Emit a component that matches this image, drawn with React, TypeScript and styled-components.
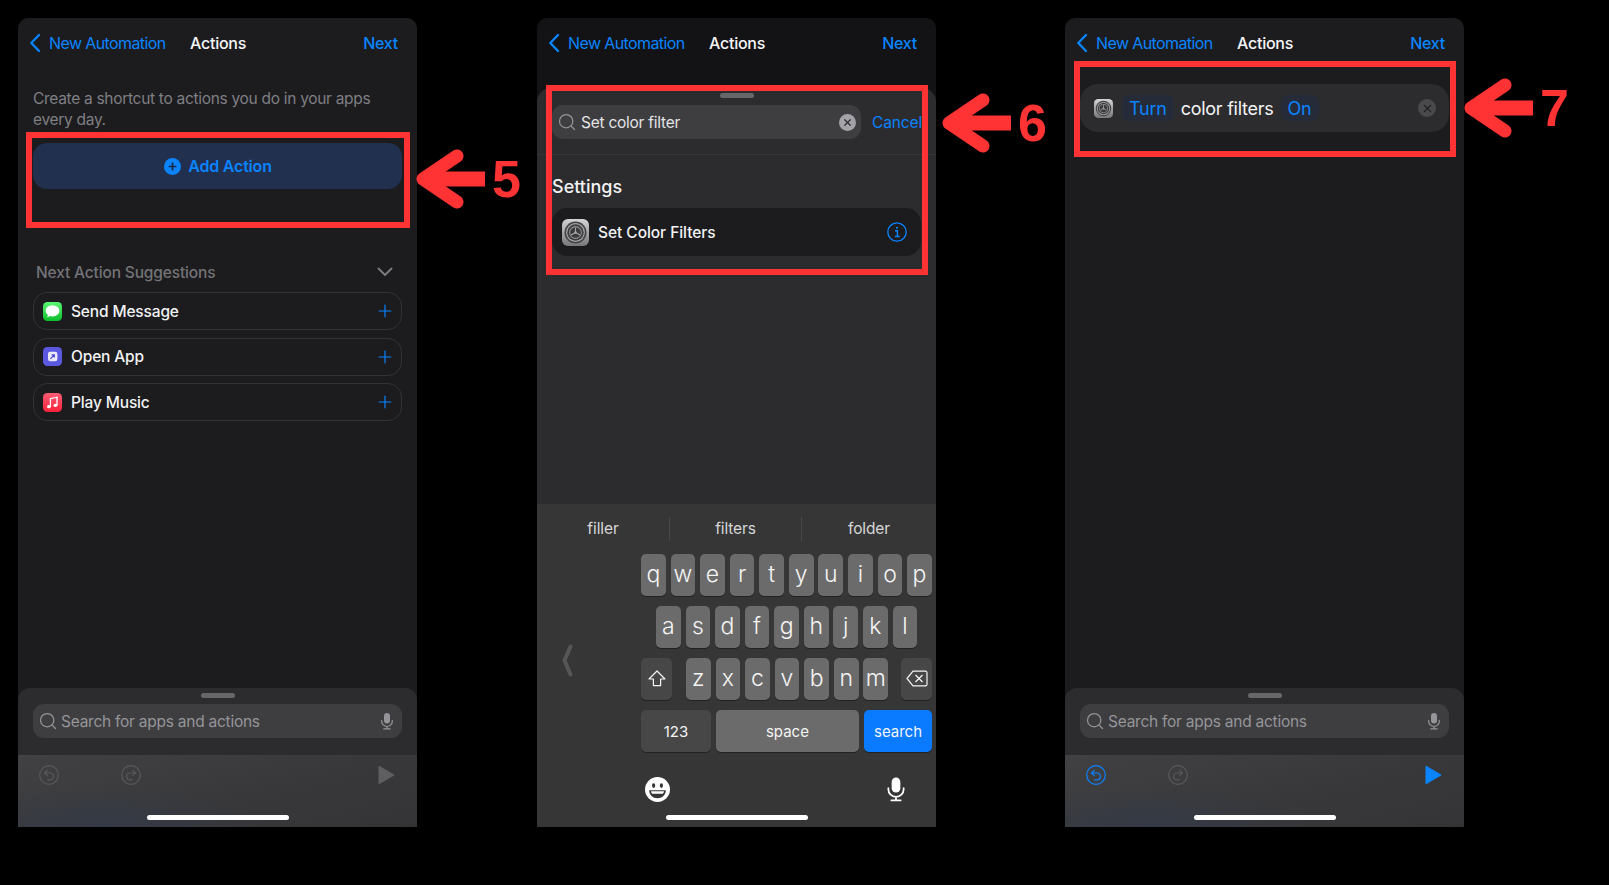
import React from "react";
import styled, { createGlobalStyle } from "styled-components";
import { Plus, Search, X } from "lucide-react";

const Global = createGlobalStyle`
  html, body { margin: 0; padding: 0; background: #000; }
  body { width: 1609px; height: 885px; overflow: hidden; font-family: Inter, "Liberation Sans", sans-serif; -webkit-font-smoothing: antialiased; }
`;

const Page = styled.div`
  display: flex;
  align-items: flex-start;
  padding: 18px 0 0 18px;
  background: #000;
  height: 867px;
  box-sizing: border-box;
`;

const Phone = styled.section<{ $gap?: number; $dim?: boolean }>`
  position: relative;
  display: flex;
  flex-direction: column;
  width: 399px;
  height: 809px;
  flex: none;
  margin-right: ${(p) => p.$gap ?? 0}px;
  border-radius: 10px 10px 0 0;
  background: ${(p) => (p.$dim ? "#131315" : "#1c1c1e")};
`;

const Nav = styled.header<{ $extra?: number }>`
  display: flex;
  align-items: center;
  height: ${(p) => 50 + (p.$extra ?? 0)}px;
  flex: none;
  padding: 0 19px ${(p) => p.$extra ?? 0}px 11px;
  box-sizing: border-box;
  font-size: 16px;
  letter-spacing: -0.25px;
`;

const NavBack = styled.span`
  display: flex;
  align-items: center;
  color: #0a84ff;
  width: 161px;
  white-space: nowrap;
  letter-spacing: -0.6px;
  svg { margin-right: 8px; flex: none; }
`;

const NavTitle = styled.span`
  color: #f5f5f7;
  font-weight: 500;
`;

const NavNext = styled.span`
  margin-left: auto;
  color: #0a84ff;
  font-weight: 500;
`;

const Body = styled.div`
  flex: 1;
  display: flex;
  flex-direction: column;
  padding: 21px 15px 0;
  min-height: 0;
`;

const Description = styled.p`
  margin: 0 0 13px;
  font-size: 15.5px;
  line-height: 20.5px;
  letter-spacing: -0.3px;
  color: #7f7f84;
`;

const AddButton = styled.div`
  display: flex;
  align-items: center;
  justify-content: center;
  gap: 7px;
  height: 46px;
  padding-left: 1px;
  border-radius: 14px;
  background: #22304f;
  color: #0a84ff;
  font-size: 16px;
  font-weight: 600;
  letter-spacing: -0.2px;
`;

const SectionHeader = styled.div`
  display: flex;
  align-items: center;
  justify-content: space-between;
  margin: 71px 0 8px;
  height: 24px;
  padding: 0 9px 0 3px;
  font-size: 15.5px;
  font-weight: 500;
  letter-spacing: -0.15px;
  color: #737378;
`;

const SuggestionList = styled.div`
  display: flex;
  flex-direction: column;
  gap: 7.7px;
`;

const Suggestion = styled.div`
  display: flex;
  align-items: center;
  height: 38px;
  box-sizing: border-box;
  padding: 0 6px 0 9px;
  border: 1px solid #333336;
  border-radius: 14px;
  color: #f2f2f4;
  font-size: 15.5px;
  font-weight: 500;
  letter-spacing: -0.15px;
  > svg:first-child { margin-right: 9px; flex: none; }
  > svg:last-child { margin-left: auto; color: #0a84ff; flex: none; }
`;

const SearchSheet = styled.div`
  flex: none;
  height: 67px;
  box-sizing: border-box;
  padding: 5px 15px 0;
  background: #2c2c2e;
  border-radius: 12px 12px 0 0;
`;

const Grabber = styled.div`
  width: 34px;
  height: 5px;
  margin: 0 auto 6px;
  border-radius: 3px;
  background: #67676b;
`;

const SearchField = styled.div`
  display: flex;
  align-items: center;
  height: 34px;
  padding: 0 5px;
  box-sizing: border-box;
  border-radius: 11px;
  background: #3e3e41;
  color: #959599;
  font-size: 15.5px;
  letter-spacing: -0.25px;
  > svg:first-child { margin-right: 3px; flex: none; }
  > svg:last-child { margin-left: auto; margin-right: 1px; flex: none; }
`;

const Toolbar = styled.footer`
  position: relative;
  flex: none;
  height: 72px;
  box-sizing: border-box;
  padding: 10px 22px 0 21px;
  display: flex;
  align-items: flex-start;
  background:
    radial-gradient(ellipse 160px 40px at 85px 100%, #343a46 0%, rgba(52, 58, 70, 0) 100%),
    linear-gradient(165deg, #414143 0%, #38383a 60%, #343436 100%);
`;

const ToolGap = styled.span`
  width: 62px;
  flex: none;
`;

const PlayWrap = styled.span`
  margin-left: auto;
  display: flex;
`;

const HomeBar = styled.div`
  position: absolute;
  left: 50%;
  bottom: 7px;
  width: 142px;
  height: 5px;
  margin-left: -71px;
  border-radius: 3px;
  background: #fff;
`;

/* second phone */
const Sheet = styled.div`
  flex: 1;
  display: flex;
  flex-direction: column;
  padding: 5px 15px 0;
  background: #2c2c2e;
  border-radius: 14px 14px 0 0;
  min-height: 0;
`;

const SearchLine = styled.div`
  position: relative;
  display: flex;
  align-items: center;
  justify-content: space-between;
  margin-top: 1px;
  padding-bottom: 16px;
  &::after {
    content: "";
    position: absolute;
    left: -15px;
    right: -15px;
    bottom: 0;
    height: 1px;
    background: #353537;
  }
`;

const ActiveSearch = styled.div`
  display: flex;
  align-items: center;
  width: 309px;
  height: 34px;
  padding: 0 5px;
  box-sizing: border-box;
  border-radius: 11px;
  background: #3e3e41;
  color: #e4e4e6;
  font-size: 15.5px;
  letter-spacing: -0.25px;
  > svg:first-child { margin-right: 4px; flex: none; }
`;

const ClearDot = styled.span`
  display: flex;
  align-items: center;
  justify-content: center;
  margin-left: auto;
  margin-right: 0;
  width: 17px;
  height: 17px;
  border-radius: 50%;
  background: #a3a3a8;
  color: #2f2f32;
`;

const Cancel = styled.span`
  color: #0a84ff;
  font-size: 15.5px;
  letter-spacing: -0.15px;
  margin-right: -1px;
`;

const GroupTitle = styled.h2`
  margin: 20px 0 9px;
  font-size: 18px;
  line-height: 24px;
  font-weight: 500;
  color: #f2f2f4;
`;

const ResultRow = styled.div`
  display: flex;
  align-items: center;
  height: 48px;
  padding: 0 14px 0 10px;
  border-radius: 15px;
  background: #1c1c1e;
  color: #f2f2f4;
  font-size: 15.5px;
  font-weight: 500;
  letter-spacing: -0.05px;
  > svg:first-child { margin-right: 9px; flex: none; }
  > svg:last-child { margin-left: auto; flex: none; }
`;

const Keyboard = styled.div`
  position: relative;
  flex: none;
  height: 323px;
  background: #363636;
`;

const Predictions = styled.div`
  display: grid;
  grid-template-columns: 133px 132px 134px;
  height: 50px;
  align-items: center;
  text-align: center;
  color: #d6d6d8;
  font-size: 15.5px;
  letter-spacing: -0.1px;
`;

const Prediction = styled.span<{ $line?: boolean }>`
  line-height: 24px;
  border-right: ${(p) => (p.$line ? "1px solid #48484a" : "none")};
`;

const KeyArea = styled.div`
  display: flex;
`;

const SideRail = styled.div`
  width: 104px;
  flex: none;
  display: flex;
  align-items: center;
  padding: 15px 0 0 25px;
  box-sizing: border-box;
  color: #565656;
`;

const KeyRows = styled.div`
  width: 291px;
  display: flex;
  flex-direction: column;
  gap: 10px;
`;

const KeyRow = styled.div<{ $inset?: number; $between?: boolean }>`
  display: flex;
  gap: 4.9px;
  padding-left: ${(p) => p.$inset ?? 0}px;
  justify-content: ${(p) => (p.$between ? "space-between" : "flex-start")};
`;

const KeyGroup = styled.div`
  display: flex;
  gap: 4.9px;
  margin-left: 1px;
`;

const Key = styled.span<{ $w?: number; $tone?: "letter" | "dark" | "blue"; $small?: boolean }>`
  display: flex;
  align-items: center;
  justify-content: center;
  flex: none;
  width: ${(p) => p.$w ?? 24.7}px;
  height: 42px;
  border-radius: 5px;
  box-shadow: 0 1px 0 #222;
  color: #f4f4f4;
  font-size: ${(p) => (p.$small ? 15 : 23)}px;
  font-weight: ${(p) => (p.$small ? 400 : 300)};
  padding-bottom: ${(p) => (p.$small ? 0 : 2)}px;
  box-sizing: border-box;
  background: ${(p) =>
    p.$tone === "dark" ? "#474747" : p.$tone === "blue" ? "#0a7aff" : "#6b6b6b"};
`;

const KeyboardExtras = styled.div`
  display: flex;
  align-items: center;
  justify-content: space-between;
  padding: 24px 27px 0 108px;
`;

/* third phone */
const ActionCard = styled.div`
  display: flex;
  align-items: center;
  height: 48px;
  margin: 16px 15px 0;
  padding: 0 13px 0 14px;
  border-radius: 18px;
  background: #2c2c2e;
  color: #f4f4f6;
  font-size: 18px;
  letter-spacing: -0.25px;
  > svg:first-child { margin-right: 9px; flex: none; }
`;

const Token = styled.span<{ $after?: number }>`
  display: flex;
  align-items: center;
  height: 26px;
  padding: 0 7px;
  margin: 0 7px 0 ${(p) => p.$after ?? 0}px;
  border-radius: 7px;
  background: #252b38;
  color: #0a84ff;
`;

const Remove = styled.span`
  display: flex;
  align-items: center;
  justify-content: center;
  margin-left: auto;
  width: 18px;
  height: 18px;
  border-radius: 50%;
  background: #4a4a4c;
  color: #1f1f21;
`;

const PhoneSpacer = styled.div`
  flex: 1;
`;

/* annotations over the picture */
const Highlight = styled.div<{ $l: number; $t: number; $w: number; $h: number }>`
  position: absolute;
  left: ${(p) => p.$l}px;
  top: ${(p) => p.$t}px;
  width: ${(p) => p.$w}px;
  height: ${(p) => p.$h}px;
  box-sizing: border-box;
  border: 6px solid #ff3333;
  pointer-events: none;
`;

const Callout = styled.div<{ $l: number; $t: number }>`
  position: absolute;
  left: ${(p) => p.$l}px;
  top: ${(p) => p.$t}px;
  display: flex;
  align-items: center;
  gap: 7px;
  height: 60px;
`;

const CalloutNumber = styled.span`
  font-family: "Liberation Sans", Arial, sans-serif;
  font-size: 52px;
  font-weight: 700;
  line-height: 60px;
  color: #ff3333;
`;

const RedArrow = () => (
  <svg width="69" height="60" viewBox="0 0 69 60" fill="none">
    <path d="M41 7 L7 30 L41 53" stroke="#ff3333" strokeWidth="13" strokeLinecap="round" strokeLinejoin="round" />
    <path d="M14 30 H69" stroke="#ff3333" strokeWidth="15" />
  </svg>
);

const BackChevron = () => (
  <svg width="12" height="20" viewBox="0 0 12 20" fill="none">
    <path d="M10 2 2.300 10 10 18" stroke="#0a84ff" strokeWidth="2.400" strokeLinecap="round" strokeLinejoin="round" />
  </svg>
);

const DownChevron = () => (
  <svg width="16" height="10" viewBox="0 0 16 10" fill="none">
    <path d="M1.500 1.500 8 8l6.500-6.500" stroke="#7b7b80" strokeWidth="1.900" strokeLinecap="round" strokeLinejoin="round" />
  </svg>
);

const Mic = ({ size = 18, color = "#959599" }: { size?: number; color?: string }) => (
  <svg width={size} height={size} viewBox="0 0 18 18" fill="none">
    <rect x="6" y="1" width="6" height="10.500" rx="3" fill={color} />
    <path d="M3.700 8.400v.8a5.300 5.300 0 0 0 10.600 0v-.8M9 14.600v2M5.800 16.900h6.400" stroke={color} strokeWidth="1.200" strokeLinecap="round" />
  </svg>
);

const CircleArrow = ({ flip, color }: { flip?: boolean; color: string }) => (
  <svg width="20" height="20" viewBox="0 0 20 20" fill="none" style={flip ? { transform: "scaleX(-1)" } : undefined}>
    <circle cx="10" cy="10" r="9.300" stroke={color} strokeWidth="1.200" />
    <path d="M8.300 5.400 5.600 8l2.700 2.600M5.800 8h5.200a3.400 3.400 0 0 1 0 6.800H8.600" stroke={color} strokeWidth="1.200" strokeLinecap="round" strokeLinejoin="round" />
  </svg>
);

const Play = ({ color }: { color: string }) => (
  <svg width="17" height="20" viewBox="0 0 17 20">
    <path d="M1 1.200 16 10 1 18.800Z" fill={color} stroke={color} strokeWidth="1" strokeLinejoin="round" />
  </svg>
);

const MessagesIcon = () => (
  <svg width="19" height="19" viewBox="0 0 19 19">
    <defs>
      <linearGradient id="msgBg" x1="0" y1="0" x2="0" y2="1">
        <stop offset="0" stopColor="#5bf675" />
        <stop offset="1" stopColor="#0cbd2a" />
      </linearGradient>
    </defs>
    <rect width="19" height="19" rx="4.400" fill="url(#msgBg)" />
    <ellipse cx="9.500" cy="8.800" rx="6.900" ry="5.600" fill="#fff" />
    <path d="M5 12.500c0 1.200-.6 2-1.400 2.700 1.600 0 3-.6 3.900-1.600Z" fill="#fff" />
  </svg>
);

const OpenAppIcon = () => (
  <svg width="19" height="19" viewBox="0 0 19 19">
    <rect width="19" height="19" rx="4.400" fill="#5b58e0" />
    <rect x="5" y="4.700" width="9.400" height="9.600" rx="2.200" fill="#e9e9fb" />
    <path d="M7.400 11.800 11 8.200M8.600 7.900h2.700v2.700" stroke="#4844d4" strokeWidth="1.200" fill="none" />
  </svg>
);

const MusicIcon = () => (
  <svg width="19" height="19" viewBox="0 0 19 19">
    <defs>
      <linearGradient id="musBg" x1="0" y1="0" x2="0" y2="1">
        <stop offset="0" stopColor="#fb5c74" />
        <stop offset="1" stopColor="#fa233b" />
      </linearGradient>
    </defs>
    <rect width="19" height="19" rx="4.400" fill="url(#musBg)" />
    <path d="M7.400 13.600V5.700l6.600-1.500v8" stroke="#fff" strokeWidth="1.300" fill="none" />
    <ellipse cx="5.900" cy="13.700" rx="1.900" ry="1.600" fill="#fff" />
    <ellipse cx="12.400" cy="12.300" rx="1.900" ry="1.600" fill="#fff" />
  </svg>
);

const SettingsIcon = ({ size, id }: { size: number; id: string }) => (
  <svg width={size} height={size} viewBox="0 0 27 27">
    <defs>
      <linearGradient id={id} x1="0" y1="0" x2="0" y2="1">
        <stop offset="0" stopColor="#d4d4d6" />
        <stop offset="1" stopColor="#77777b" />
      </linearGradient>
    </defs>
    <rect width="27" height="27" rx="6" fill={`url(#${id})`} />
    <circle cx="13.500" cy="13.500" r="11" fill="#444446" />
    <circle cx="13.500" cy="13.500" r="9.400" fill="#a4a4a6" />
    <circle cx="13.500" cy="13.500" r="8.200" fill="#3e3e40" />
    <circle cx="13.500" cy="13.500" r="6.400" fill="#8f8f91" />
    <circle cx="13.500" cy="13.500" r="5.300" fill="#3a3a3c" />
    <path d="M13.500 13.500V8.600M13.500 13.500l4.400 2.400M13.500 13.500l-4.400 2.400" stroke="#a4a4a6" strokeWidth="1.100" />
    <circle cx="13.500" cy="13.500" r="1.300" fill="#a4a4a6" />
  </svg>
);

const InfoIcon = () => (
  <svg width="20" height="20" viewBox="0 0 20 20" fill="none">
    <circle cx="10" cy="10" r="9.200" stroke="#0a84ff" strokeWidth="1.300" />
    <circle cx="10" cy="5.800" r="1.100" fill="#0a84ff" />
    <path d="M8 8.700h2.400v5.600M7.800 14.500h5" stroke="#0a84ff" strokeWidth="1.400" />
  </svg>
);

const AddGlyph = () => (
  <svg width="17" height="17" viewBox="0 0 17 17">
    <circle cx="8.500" cy="8.500" r="8.500" fill="#0a84ff" />
    <path d="M8.500 4.600v7.800M4.600 8.500h7.800" stroke="#1c2a45" strokeWidth="1.700" />
  </svg>
);

const ShiftIcon = () => (
  <svg width="20" height="19" viewBox="0 0 20 19" fill="none">
    <path d="M10 2 2 10h4.400v6.600h7.200V10H18Z" stroke="#f4f4f4" strokeWidth="1.200" strokeLinejoin="round" />
  </svg>
);

const BackspaceIcon = () => (
  <svg width="22" height="17" viewBox="0 0 22 17" fill="none">
    <path d="M7 1.200h12.400a1.600 1.600 0 0 1 1.600 1.600v11.400a1.600 1.600 0 0 1-1.600 1.600H7L1 8.500Z" stroke="#f4f4f4" strokeWidth="1.200" strokeLinejoin="round" />
    <path d="m9.500 5 7 7M16.500 5l-7 7" stroke="#f4f4f4" strokeWidth="1.300" />
  </svg>
);

const EmojiIcon = () => (
  <svg width="25" height="25" viewBox="0 0 25 25">
    <circle cx="12.500" cy="12.500" r="12.500" fill="#fff" />
    <ellipse cx="8.600" cy="8.600" rx="1.600" ry="2.300" fill="#363636" />
    <ellipse cx="16.400" cy="8.600" rx="1.600" ry="2.300" fill="#363636" />
    <path d="M4.200 13.200h16.600c0 4.600-3.600 8-8.300 8s-8.300-3.400-8.300-8Z" fill="#363636" />
    <path d="M6 14.200h13c-.2 1.100-.6 1.900-1.200 2.600H7.200C6.600 16.100 6.200 15.300 6 14.200Z" fill="#fff" />
  </svg>
);

const SideChevron = () => (
  <svg width="11" height="33" viewBox="0 0 11 33" fill="none">
    <path d="M8.500 2.500 2.500 16.500 8.500 30.500" stroke="currentColor" strokeWidth="4" strokeLinecap="round" strokeLinejoin="round" />
  </svg>
);

const NavBar = ({ extra }: { extra?: number }) => (
  <Nav $extra={extra}>
    <NavBack>
      <BackChevron />
      New Automation
    </NavBack>
    <NavTitle>Actions</NavTitle>
    <NavNext>Next</NavNext>
  </Nav>
);

const BottomPanel = ({ active }: { active?: boolean }) => (
  <>
    <SearchSheet>
      <Grabber />
      <SearchField>
        <Search size={20} strokeWidth={1.500} />
        Search for apps and actions
        <Mic />
      </SearchField>
    </SearchSheet>
    <Toolbar>
      <CircleArrow color={active ? "#0a84ff" : "#59595b"} />
      <ToolGap />
      <CircleArrow flip color="#59595b" />
      <PlayWrap>
        <Play color={active ? "#0a84ff" : "#5f5f61"} />
      </PlayWrap>
      <HomeBar />
    </Toolbar>
  </>
);

const row1 = "qwertyuiop".split("");
const row2 = "asdfghjkl".split("");
const row3 = "zxcvbnm".split("");

export default function App() {
  return (
    <Page>
      <Global />
      <Phone $gap={120}>
        <NavBar />
        <Body>
          <Description>Create a shortcut to actions you do in your apps every day.</Description>
          <AddButton>
            <AddGlyph />
            Add Action
          </AddButton>
          <SectionHeader>
            Next Action Suggestions
            <DownChevron />
          </SectionHeader>
          <SuggestionList>
            <Suggestion>
              <MessagesIcon />
              Send Message
              <Plus size={20} strokeWidth={1.400} />
            </Suggestion>
            <Suggestion>
              <OpenAppIcon />
              Open App
              <Plus size={20} strokeWidth={1.400} />
            </Suggestion>
            <Suggestion>
              <MusicIcon />
              Play Music
              <Plus size={20} strokeWidth={1.400} />
            </Suggestion>
          </SuggestionList>
        </Body>
        <BottomPanel />
        <Highlight $l={8} $t={114} $w={384} $h={96} />
        <Callout $l={398} $t={131}>
          <RedArrow />
          <CalloutNumber>5</CalloutNumber>
        </Callout>
      </Phone>

      <Phone $gap={129} $dim>
        <NavBar extra={20} />
        <Sheet>
          <Grabber />
          <SearchLine>
            <ActiveSearch>
              <Search size={20} strokeWidth={1.500} color="#959599" />
              Set color filter
              <ClearDot>
                <X size={11} strokeWidth={2.600} />
              </ClearDot>
            </ActiveSearch>
            <Cancel>Cancel</Cancel>
          </SearchLine>
          <GroupTitle>Settings</GroupTitle>
          <ResultRow>
            <SettingsIcon size={27} id="setA" />
            Set Color Filters
            <InfoIcon />
          </ResultRow>
        </Sheet>
        <Keyboard>
          <Predictions>
            <Prediction $line>filler</Prediction>
            <Prediction $line>filters</Prediction>
            <Prediction>folder</Prediction>
          </Predictions>
          <KeyArea>
            <SideRail>
              <SideChevron />
            </SideRail>
            <KeyRows>
              <KeyRow>
                {row1.map((k) => (
                  <Key key={k}>{k}</Key>
                ))}
              </KeyRow>
              <KeyRow $inset={15}>
                {row2.map((k) => (
                  <Key key={k}>{k}</Key>
                ))}
              </KeyRow>
              <KeyRow $between>
                <Key $w={31} $tone="dark">
                  <ShiftIcon />
                </Key>
                <KeyGroup>
                  {row3.map((k) => (
                    <Key key={k}>{k}</Key>
                  ))}
                </KeyGroup>
                <Key $w={31} $tone="dark">
                  <BackspaceIcon />
                </Key>
              </KeyRow>
              <KeyRow>
                <Key $w={70} $tone="dark" $small>
                  123
                </Key>
                <Key $w={143} $small>
                  space
                </Key>
                <Key $w={68.500} $tone="blue" $small>
                  search
                </Key>
              </KeyRow>
            </KeyRows>
          </KeyArea>
          <KeyboardExtras>
            <EmojiIcon />
            <Mic size={26} color="#ffffff" />
          </KeyboardExtras>
          <HomeBar />
        </Keyboard>
        <Highlight $l={9} $t={67} $w={382} $h={190} />
        <Callout $l={405} $t={75}>
          <RedArrow />
          <CalloutNumber>6</CalloutNumber>
        </Callout>
      </Phone>

      <Phone>
        <NavBar />
        <ActionCard>
          <SettingsIcon size={19} id="setB" />
          <Token>Turn</Token>
          color filters
          <Token $after={7}>On</Token>
          <Remove>
            <X size={13} strokeWidth={2} />
          </Remove>
        </ActionCard>
        <PhoneSpacer />
        <BottomPanel active />
        <Highlight $l={9} $t={43} $w={382} $h={96} />
        <Callout $l={399} $t={60}>
          <RedArrow />
          <CalloutNumber>7</CalloutNumber>
        </Callout>
      </Phone>
    </Page>
  );
}
